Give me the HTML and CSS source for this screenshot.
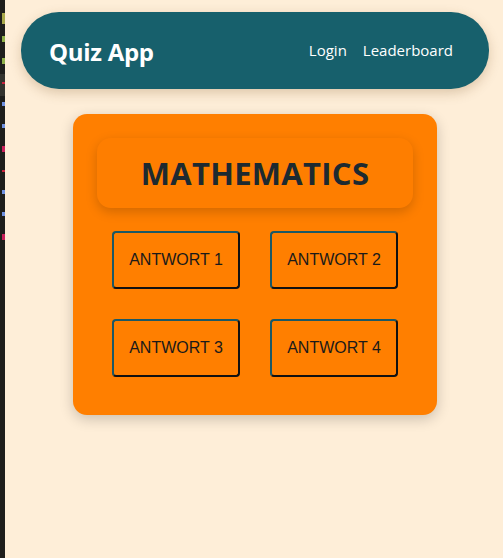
FILE: index.html
```html
<!DOCTYPE html>
<html lang="de">
<head>
<meta charset="utf-8">
<title>Quiz App</title>
<link rel="stylesheet" href="styles.css">
</head>
<body>
<div class="editor-strip" aria-hidden="true">
  <i class="mark m-y tall"></i>
  <i class="mark m-g"></i>
  <i class="mark m-g"></i>
  <i class="mark m-r hl"></i>
  <i class="mark m-b"></i>
  <i class="mark m-b"></i>
  <i class="mark m-m"></i>
  <i class="mark m-r"></i>
  <i class="mark m-b"></i>
  <i class="mark m-b"></i>
  <i class="mark m-m"></i>
</div>
<div class="page">
  <nav class="navbar">
    <div class="brand">Quiz App</div>
    <div class="links">
      <a href="#">Login</a>
      <a href="#">Leaderboard</a>
    </div>
  </nav>
  <main class="card">
    <h1 class="title">MATHEMATICS</h1>
    <div class="answers">
      <button class="answer">ANTWORT 1</button>
      <button class="answer">ANTWORT 2</button>
      <button class="answer">ANTWORT 3</button>
      <button class="answer">ANTWORT 4</button>
    </div>
  </main>
</div>
</body>
</html>
```

FILE: styles.css
```css
html, body {
  margin: 0;
  padding: 0;
  height: 100%;
}
body {
  display: flex;
  background: #feeed8;
  font-family: "Open Sans", "Noto Sans", sans-serif;
}
.editor-strip {
  width: 5px;
  flex: none;
  background: #1e1e1c;
  display: flex;
  flex-direction: column;
  padding-top: 8px;
}
.mark {
  display: block;
  height: 22px;
  position: relative;
}
.mark::before {
  content: "";
  position: absolute;
  left: 2px;
  top: 6px;
  width: 3px;
  height: 6px;
}
.mark.tall::before { top: 5px; height: 11px; }
.mark.hl { background: #33332e; }
.m-y::before { background: #a8a84a; }
.m-g::before { background: #8fb04a; }
.m-r::before { background: #c8233e; height: 2px; top: 8px; }
.m-b::before { background: #6f90e0; height: 4px; }
.m-m::before { background: #c8205a; }
.page {
  flex: 1;
  display: flex;
  flex-direction: column;
  align-items: center;
  padding-top: 12px;
  padding-left: 2px;
}
.navbar {
  box-sizing: border-box;
  width: 468px;
  height: 77px;
  background: #17606c;
  border-radius: 38px;
  display: flex;
  align-items: center;
  justify-content: space-between;
  padding: 0 36px 0 28px;
  box-shadow: 0 4px 12px rgba(120, 80, 30, 0.25);
}
.brand {
  color: #fff;
  font-size: 24px;
  font-weight: 700;
  letter-spacing: -0.3px;
  margin-top: 2px;
}
.links {
  display: flex;
  gap: 16px;
  margin-top: -2px;
}
.links a {
  color: #fff;
  text-decoration: none;
  font-size: 15px;
}
.card {
  box-sizing: border-box;
  margin-top: 25px;
  width: 364px;
  height: 301px;
  background: #ff7f00;
  border-radius: 14px;
  padding: 24px;
  box-shadow: 0 4px 14px rgba(0, 0, 0, 0.2);
}
.title {
  margin: 0;
  height: 70px;
  border-radius: 14px;
  background: #fe7e00;
  box-shadow: 0 4px 12px rgba(0, 0, 0, 0.18);
  display: flex;
  align-items: center;
  justify-content: center;
  color: #1d2a30;
  font-size: 31px;
  font-weight: 700;
  letter-spacing: 0.3px;
}
.answers {
  margin-top: 23px;
  display: grid;
  grid-template-columns: 128px 128px;
  column-gap: 30px;
  row-gap: 30px;
  justify-content: center;
}
.answer {
  box-sizing: border-box;
  height: 58px;
  background: #ff7f00;
  border: 2px solid;
  border-color: #1b5866 #111 #111 #1b5866;
  border-radius: 4px;
  font-family: "Liberation Sans", Arial, sans-serif;
  font-size: 16px;
  color: #1a1a1a;
  padding: 0;
}
```
